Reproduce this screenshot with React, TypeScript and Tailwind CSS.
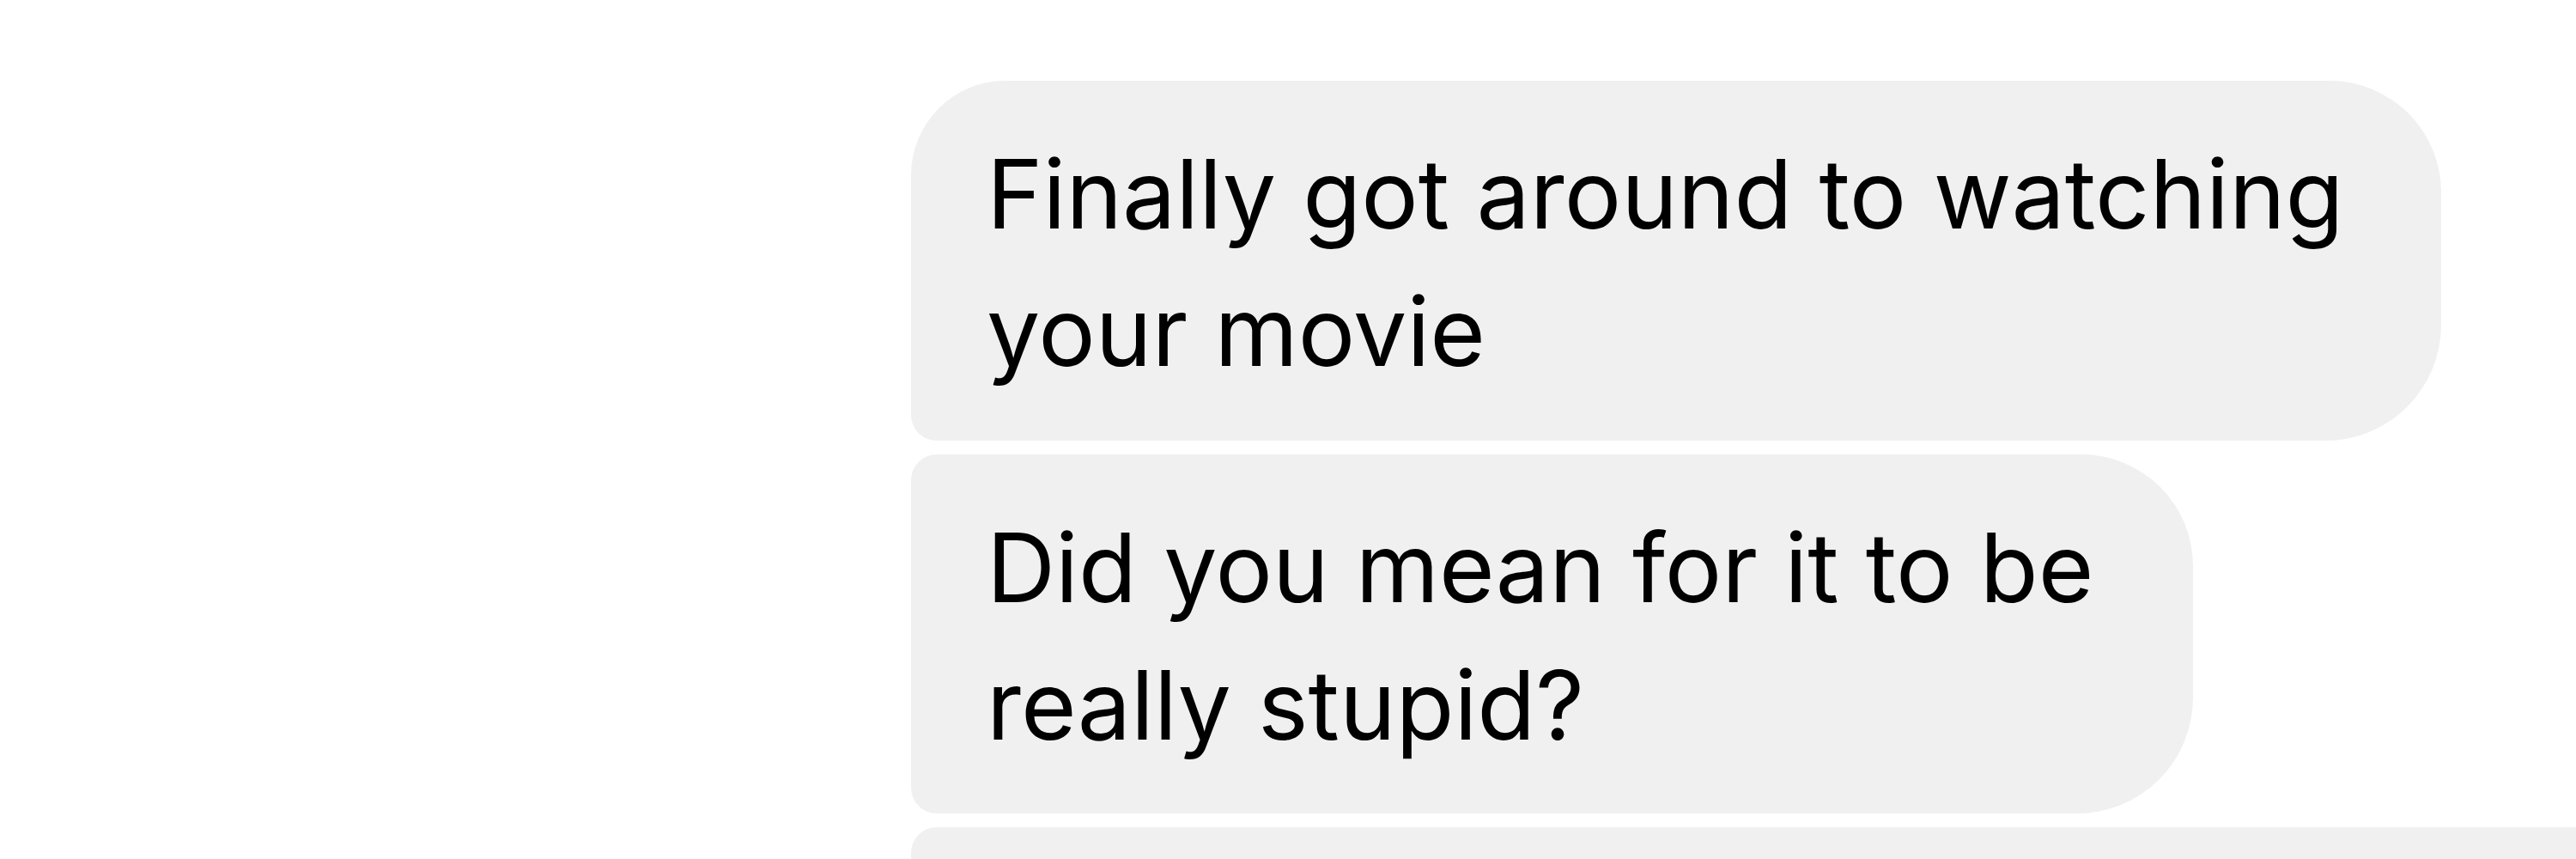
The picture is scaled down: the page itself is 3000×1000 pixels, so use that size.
export default function App() {
  return (
    <div className="h-[1000px] w-[3000px] overflow-hidden bg-white">
      <div className="flex flex-col items-start gap-4 pl-[1061px] pt-[94px] font-['Inter',sans-serif] text-[111px] leading-[160px] text-black">
        <div className="w-[1782px] rounded-tl-[110px] rounded-tr-[130px] rounded-br-[135px] rounded-bl-[30px] bg-[#f0f0f0] pl-[88px] pr-[60px] pt-[52px] pb-[47px]">
          Finally got around to watching your movie
        </div>
        <div className="w-[1493px] rounded-tl-[30px] rounded-tr-[130px] rounded-br-[135px] rounded-bl-[30px] bg-[#f0f0f0] pl-[88px] pr-[60px] pt-[52px] pb-[46px]">
          Did you mean for it to be really stupid?
        </div>
        <div className="h-[300px] w-[2100px] rounded-tl-[30px] rounded-tr-[130px] bg-[#f0f0f0]" />
      </div>
    </div>
  )
}
